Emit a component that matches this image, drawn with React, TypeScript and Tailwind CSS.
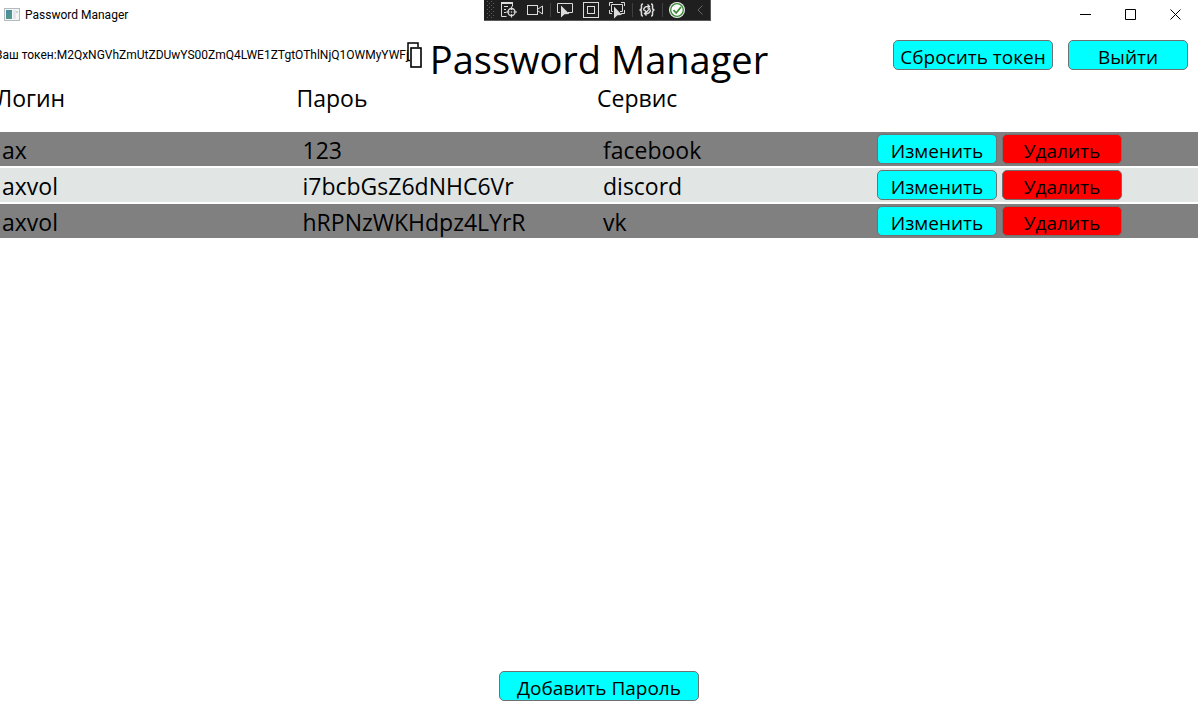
import type { ReactNode } from "react";

const entries = [
  { login: "ax", password: "123", service: "facebook" },
  { login: "axvol", password: "i7bcbGsZ6dNHC6Vr", service: "discord" },
  { login: "axvol", password: "hRPNzWKHdpz4LYrR", service: "vk" },
];

const token = "M2QxNGVhZmUtZDUwYS00ZmQ4LWE1ZTgtOThlNjQ1OWMyYWFj";

function ActionButton({ size, tone = "cyan", children }: { size: "sm" | "md" | "lg"; tone?: "cyan" | "red"; children: ReactNode }) {
  const width = size === "lg" ? "w-[200px]" : size === "md" ? "w-40" : "w-[120px]";
  const color = tone === "red" ? "bg-[#ff0000]" : "bg-[#00ffff]";
  return (
    <button
      type="button"
      className={`flex h-[30px] shrink-0 items-center justify-center rounded-[5px] border border-[#707070] pt-1 text-[19px] leading-6 whitespace-nowrap ${width} ${color}`}
    >
      {children}
    </button>
  );
}

function AppIcon() {
  return (
    <svg width="16" height="14" viewBox="0 0 16 14" aria-hidden="true">
      <defs>
        <linearGradient id="pane" x1="0" y1="0" x2="1" y2="1">
          <stop offset="0" stopColor="#4a86a8" />
          <stop offset="1" stopColor="#4fa07c" />
        </linearGradient>
      </defs>
      <rect x="0.5" y="0.5" width="15" height="12" fill="#f4f5f7" stroke="#b4b9be" />
      <rect x="2" y="2" width="6" height="9" fill="url(#pane)" />
      <rect x="9" y="2" width="3" height="9" fill="#e3e6ee" />
      <rect x="12" y="3" width="2" height="2" fill="#c5d6cf" />
    </svg>
  );
}

function ToolButton({ label, narrow = false, children }: { label: string; narrow?: boolean; children: ReactNode }) {
  return (
    <button
      type="button"
      aria-label={label}
      className={`flex h-5 shrink-0 items-center justify-center ${narrow ? "w-5" : "w-[26px]"}`}
    >
      <svg width="18" height="18" viewBox="0 0 18 18" fill="none" stroke="#dcdcdc" aria-hidden="true">
        {children}
      </svg>
    </button>
  );
}

function Divider() {
  return (
    <span className="flex w-1 shrink-0 justify-center">
      <span className="h-3.5 w-px bg-[#3f3f42]" />
    </span>
  );
}

function DebugToolbar() {
  return (
    <div className="mr-[3px] flex h-[21px] w-[227px] items-center border-r border-b border-[#5a5a5a] bg-[#1f1f20] pl-[3px]">
      <svg className="shrink-0" width="9" height="18" viewBox="0 0 9 18" fill="#606064" aria-hidden="true">
        {[0, 4, 8, 12, 16].map((y) => (
          <g key={y}>
            <rect x="0" y={y} width="1" height="1" />
            <rect x="4" y={y} width="1" height="1" />
            <rect x="2" y={y + 2} width="1" height="1" />
            <rect x="6" y={y + 2} width="1" height="1" />
          </g>
        ))}
      </svg>
      <ToolButton label="Live Visual Tree">
        <path d="M1 2h12" strokeWidth="2" />
        <path d="M1.500 3v12.500h5M12.500 3v2.500M4 5.500h4M4 8.500h2M4 11.500h2" />
        <circle cx="11.500" cy="11" r="3.500" strokeWidth="1.300" />
        <path d="M11.500 5.500v3.500M11.500 13v3.500M6 11h3.500M13.500 11H17" strokeWidth="1.200" />
        <circle cx="11.500" cy="11" r=".8" fill="#dcdcdc" stroke="none" />
      </ToolButton>
      <ToolButton label="Record">
        <rect x="1.500" y="4.500" width="10" height="9" />
        <path d="M12 8l4.500-3v8L12 10" />
      </ToolButton>
      <Divider />
      <ToolButton label="Select element">
        <path d="M4 11.500H1.500v-9h15v9H12" />
        <path d="M5 4.500v12l3.500-3.300 5-.2z" fill="#dcdcdc" stroke="none" />
      </ToolButton>
      <ToolButton label="Display layout adorners">
        <rect x="1.500" y="1.500" width="15" height="15" />
        <rect x="5.500" y="5.500" width="7" height="7" />
      </ToolButton>
      <ToolButton label="Track focused element">
        <path d="M1.500 5V1.500H5M13 1.500h3.500V5M1.500 9v3.500H4M16.500 9v3.500H13M5 10.500H3.500v-7h11v7H12" />
        <path d="M6 5.500v12l3.500-3.300 4.500-.2z" fill="#dcdcdc" stroke="none" />
      </ToolButton>
      <Divider />
      <ToolButton label="Binding failures">
        <path d="M5 3C3 3 3.500 5 3.500 6.500S2.500 9 1.500 9c1 0 2 1 2 2.500S3 15 5 15M13 3c2 0 1.500 2 1.500 3.500S15.500 9 16.500 9c-1 0-2 1-2 2.500S15 15 13 15" strokeWidth="1.500" />
        <path d="M5.500 9.500C5.500 6.500 8 5 11 5.500M12.500 8.500c0 3-2.500 4.500-5.500 4M6.500 9l2 2.200L12 7M9.500 3.500l2 2-2 2M8.500 14.500l-2-2 2-2" strokeWidth="1.400" />
      </ToolButton>
      <Divider />
      <ToolButton label="Hot Reload">
        <circle cx="9" cy="9" r="8" fill="#f0f0f0" stroke="none" />
        <circle cx="9" cy="9" r="6.300" fill="#ffffff" stroke="#388a34" strokeWidth="1.300" />
        <path d="M5.500 9.200l2.700 2.800 4.800-6" stroke="#388a34" strokeWidth="1.800" />
      </ToolButton>
      <ToolButton label="Collapse toolbar" narrow>
        <path d="M11.500 4.500L7 9l4.500 4.500" stroke="#68686c" />
      </ToolButton>
    </div>
  );
}

function WindowButton({ label, path }: { label: string; path: string }) {
  return (
    <button type="button" aria-label={label} className="flex h-full w-[45px] items-center justify-center">
      <svg width="11" height="11" viewBox="0 0 11 11" fill="none" stroke="#000000" aria-hidden="true">
        <path d={path} />
      </svg>
    </button>
  );
}

export default function App() {
  return (
    <div className="flex min-h-screen flex-col overflow-hidden bg-white font-['Open_Sans','Noto_Sans',sans-serif] text-black">
      <div className="grid h-[29px] grid-cols-[1fr_auto_1fr]">
        <div className="flex items-center gap-[5px] pl-1">
          <AppIcon />
          <span className="font-[Roboto,sans-serif] text-[12px] leading-4">Password Manager</span>
        </div>
        <DebugToolbar />
        <div className="flex h-full justify-end">
          <WindowButton label="Minimize" path="M0 5.500h11" />
          <WindowButton label="Maximize" path="M.5.500h10v10H.5z" />
          <WindowButton label="Close" path="M.5.500l10 10M10.500.500l-10 10" />
        </div>
      </div>

      <header className="grid grid-cols-[1fr_auto_1fr] items-start">
        <div className="flex h-[52px] min-w-0 items-center justify-end pr-2">
          <p className="font-[Roboto,sans-serif] text-[12px] leading-4 whitespace-nowrap">Ваш токен:{token}</p>
          <button type="button" aria-label="Копировать токен" className="-ml-0.5 shrink-0">
            <svg width="15" height="26" viewBox="0 0 15 26" fill="none" stroke="#000000" aria-hidden="true">
              <path d="M11 5V1H1v17.500h2" strokeWidth="1.500" />
              <rect x="4" y="6" width="10" height="19" fill="#ffffff" strokeWidth="1.600" />
            </svg>
          </button>
        </div>
        <h1 className="pt-1 text-[38px] leading-[52px]">Password Manager</h1>
        <div className="flex h-[52px] items-center justify-end gap-[15px] pr-2.5">
          <ActionButton size="md">Сбросить токен</ActionButton>
          <ActionButton size="sm">Выйти</ActionButton>
        </div>
      </header>

      <main className="flex grow flex-col">
        <table className="-ml-1 w-[calc(100%+4px)] table-fixed border-separate border-spacing-x-0 border-spacing-y-[2px] text-left text-[23px] leading-[30px]">
          <thead>
            <tr className="h-[43px] leading-[22px]">
              <th className="w-1/4 p-0 align-top font-normal">Логин</th>
              <th className="w-1/4 p-0 align-top font-normal">Пароь</th>
              <th className="p-0 align-top font-normal">Сервис</th>
              <th className="w-[321px] p-0" aria-label="Действия" />
            </tr>
          </thead>
          <tbody>
            {entries.map((entry) => (
              <tr key={entry.password} className="h-[34px] odd:bg-[#808080] even:bg-[#e1e6e4]">
                <td className="px-1.5 pt-0.5 pb-0">{entry.login}</td>
                <td className="px-1.5 pt-0.5 pb-0">{entry.password}</td>
                <td className="px-1.5 pt-0.5 pb-0">{entry.service}</td>
                <td className="p-0">
                  <div className="flex gap-[5px]">
                    <ActionButton size="sm">Изменить</ActionButton>
                    <ActionButton size="sm" tone="red">Удалить</ActionButton>
                  </div>
                </td>
              </tr>
            ))}
          </tbody>
        </table>
      </main>

      <footer className="flex justify-center pb-[9px]">
        <ActionButton size="lg">Добавить Пароль</ActionButton>
      </footer>
    </div>
  );
}
